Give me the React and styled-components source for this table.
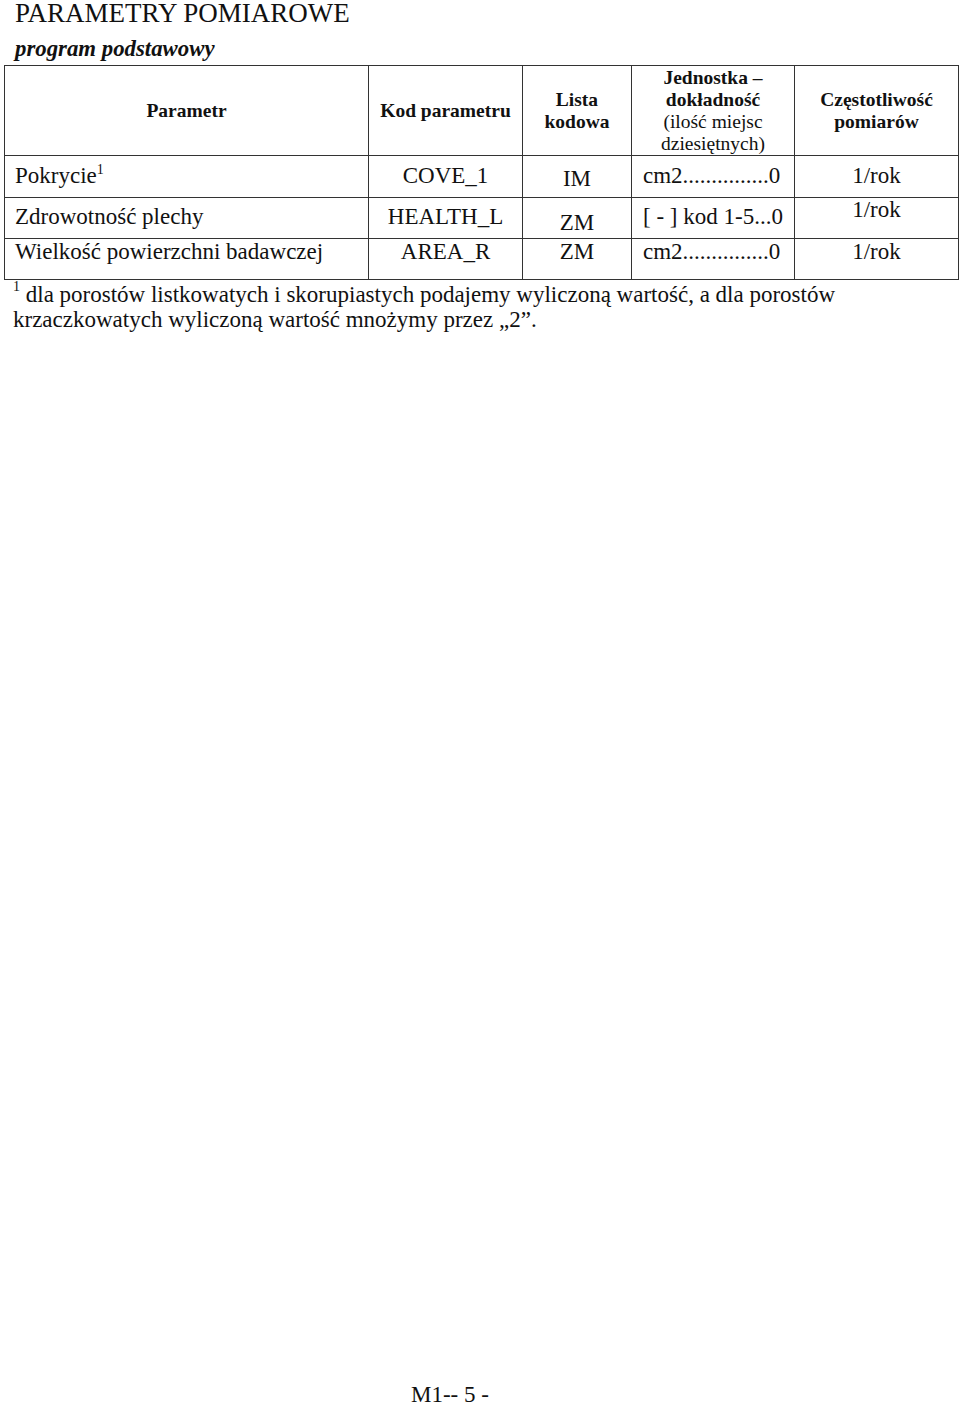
import React from 'react';
import styled, {createGlobalStyle} from 'styled-components';

const GlobalStyle = createGlobalStyle`
  html, body {
    margin: 0;
    padding: 0;
    background: #fff;
  }
  body {
    font-family: "Liberation Serif", "Times New Roman", serif;
    color: #111;
  }
`;

const Page = styled.div`
  min-height: 1407px;
  display: flex;
  flex-direction: column;
  box-sizing: border-box;
`;

const Title = styled.h1`
  margin: 0 0 0 15px;
  font-size: 27px;
  line-height: 26px;
  font-weight: normal;
`;

const Subtitle = styled.h2`
  margin: 11px 0 4px 15px;
  font-size: 22.8px;
  line-height: 24px;
  font-weight: bold;
  font-style: italic;
`;

const Table = styled.div`
  margin-left: 4px;
  width: 955px;
  display: grid;
  grid-template-columns: 364px 154px 109px 163px 164px;
  grid-template-rows: 90px 42px 41px 41px;
  border-top: 1px solid #333;
  border-left: 1px solid #333;
  box-sizing: border-box;
`;

const HeadCell = styled.div`
  box-sizing: border-box;
  border-right: 1px solid #333;
  border-bottom: 1px solid #333;
  display: flex;
  align-items: center;
  justify-content: center;
  text-align: center;
  font-size: 19.5px;
  line-height: 22px;
  font-weight: bold;
`;

const Light = styled.span`
  font-weight: normal;
`;

const Cell = styled.div`
  box-sizing: border-box;
  border-right: 1px solid #333;
  border-bottom: 1px solid #333;
  font-size: 23px;
  line-height: 24px;
  white-space: nowrap;
  text-align: ${p => p.$align || 'center'};
  padding-top: ${p => p.$top || 0}px;
  padding-left: ${p => p.$indent || 0}px;
`;

const Sup = styled.sup`
  font-size: 14px;
  line-height: 0;
  vertical-align: ${p => p.$raise || 9}px;
`;

const Footnote = styled.p`
  margin: 2px 0 0 13px;
  font-size: 23px;
  line-height: 25px;
`;

const Footer = styled.div`
  margin-top: auto;
  padding: 0 0 1px 411px;
  font-size: 23px;
  line-height: 23px;
`;

const rows = [
  {
    name: <>Pokrycie<Sup>1</Sup></>,
    code: 'COVE_1',
    list: 'IM',
    unit: 'cm2...............0',
    freq: '1/rok',
    top: [8, 8, 11, 8, 8],
  },
  {
    name: 'Zdrowotność plechy',
    code: 'HEALTH_L',
    list: 'ZM',
    unit: '[ - ] kod 1-5...0',
    freq: '1/rok',
    top: [7, 7, 13, 7, 0],
  },
  {
    name: 'Wielkość powierzchni badawczej',
    code: 'AREA_R',
    list: 'ZM',
    unit: 'cm2...............0',
    freq: '1/rok',
    top: [1, 1, 1, 1, 1],
  },
];

export default function App() {
  return (
    <Page>
      <GlobalStyle/>
      <Title>PARAMETRY POMIAROWE</Title>
      <Subtitle>program podstawowy</Subtitle>
      <Table>
        <HeadCell>Parametr</HeadCell>
        <HeadCell>Kod parametru</HeadCell>
        <HeadCell>Lista<br/>kodowa</HeadCell>
        <HeadCell>
          <div>Jednostka –<br/>dokładność<br/><Light>(ilość miejsc<br/>dziesiętnych)</Light></div>
        </HeadCell>
        <HeadCell>Częstotliwość<br/>pomiarów</HeadCell>
        {rows.map((r, i) => (
          <React.Fragment key={i}>
            <Cell $align="left" $indent={10} $top={r.top[0]}>{r.name}</Cell>
            <Cell $top={r.top[1]}>{r.code}</Cell>
            <Cell $top={r.top[2]}>{r.list}</Cell>
            <Cell $align="left" $indent={11} $top={r.top[3]}>{r.unit}</Cell>
            <Cell $top={r.top[4]}>{r.freq}</Cell>
          </React.Fragment>
        ))}
      </Table>
      <Footnote>
        <Sup $raise={11}>1</Sup> dla porostów listkowatych i skorupiastych podajemy wyliczoną wartość, a dla porostów<br/>
        krzaczkowatych wyliczoną wartość mnożymy przez „2”.
      </Footnote>
      <Footer>M1-- 5 -</Footer>
    </Page>
  );
}
